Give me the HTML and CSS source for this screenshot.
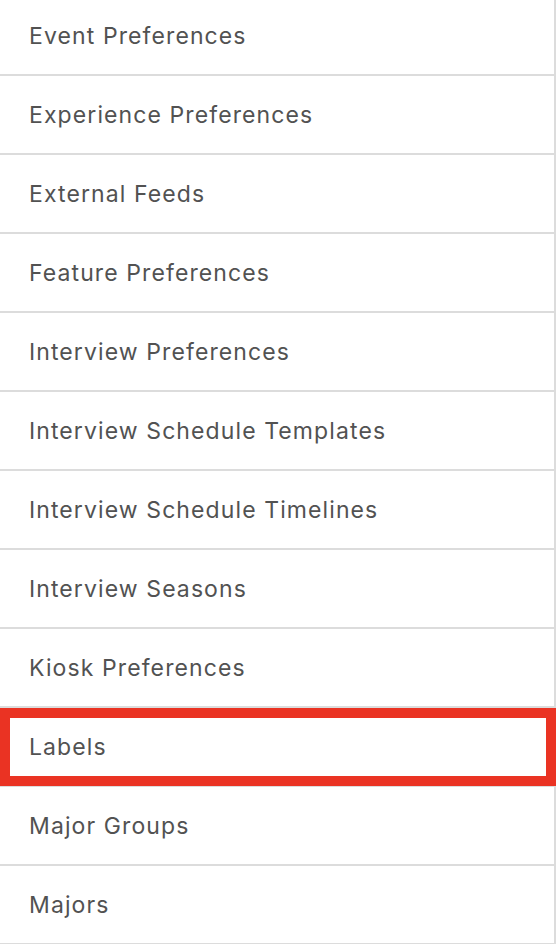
FILE: index.html
```html
<!DOCTYPE html>
<html lang="en">
<head>
<meta charset="utf-8">
<title>Settings</title>
<link rel="stylesheet" href="styles.css">
</head>
<body>
<ul class="menu">
  <li class="item">Event Preferences</li>
  <li class="item">Experience Preferences</li>
  <li class="item">External Feeds</li>
  <li class="item">Feature Preferences</li>
  <li class="item">Interview Preferences</li>
  <li class="item">Interview Schedule Templates</li>
  <li class="item">Interview Schedule Timelines</li>
  <li class="item">Interview Seasons</li>
  <li class="item">Kiosk Preferences</li>
  <li class="item item-highlight">Labels</li>
  <li class="item">Major Groups</li>
  <li class="item">Majors</li>
</ul>
</body>
</html>
```
FILE: styles.css
```css
html, body {
  margin: 0;
  padding: 0;
  background: #ffffff;
  overflow: hidden;
}
.menu {
  list-style: none;
  margin: -3px 0 0 0;
  padding: 0;
  width: 554px;
  border-right: 2px solid #dcdcdc;
}
.item {
  height: 77px;
  display: flex;
  align-items: center;
  padding-left: 29px;
  border-bottom: 2px solid #dcdcdc;
  font-family: "Inter", "Liberation Sans", sans-serif;
  font-size: 23px;
  letter-spacing: 1.1px;
  color: #525252;
}
.item-highlight {
  position: relative;
}
.item-highlight::after {
  content: "";
  position: absolute;
  left: 0;
  top: 0;
  right: -2px;
  bottom: -1px;
  border: 10px solid #ea3323;
}
```
